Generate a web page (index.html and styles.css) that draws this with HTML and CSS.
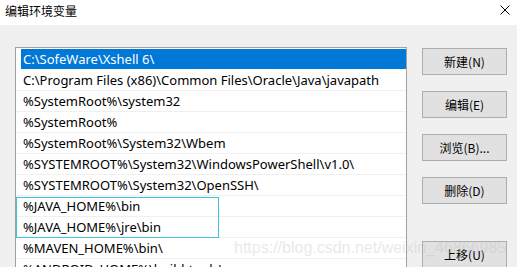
FILE: index.html
```html
<!DOCTYPE html>
<html lang="zh-CN">
<head>
    <meta charset="UTF-8">
    <meta name="viewport" content="width=device-width, initial-scale=1.0">
    <title>编辑环境变量</title>
    <link rel="stylesheet" href="styles.css">
</head>
<body>
    <div class="dialog">
        <div class="titlebar">
            <span class="title">编辑环境变量</span>
            <svg class="close" width="10" height="10" viewBox="0 0 10 10">
                <path d="M0.5 0.5 L9.5 9.5 M9.5 0.5 L0.5 9.5" stroke="#000" stroke-width="1" fill="none"/>
            </svg>
        </div>

        <div class="content">
            <div class="path-list">
                <div class="row selected">C:\SofeWare\Xshell 6\</div>
                <div class="row">C:\Program Files (x86)\Common Files\Oracle\Java\javapath</div>
                <div class="row">%SystemRoot%\system32</div>
                <div class="row">%SystemRoot%</div>
                <div class="row">%SystemRoot%\System32\Wbem</div>
                <div class="row">%SYSTEMROOT%\System32\WindowsPowerShell\v1.0\</div>
                <div class="row">%SYSTEMROOT%\System32\OpenSSH\</div>
                <div class="row">%JAVA_HOME%\bin</div>
                <div class="row">%JAVA_HOME%\jre\bin</div>
                <div class="row">%MAVEN_HOME%\bin\</div>
                <div class="row">%ANDROID_HOME%\build-tools\</div>
                <div class="highlight"></div>
            </div>

            <div class="buttons">
                <button class="btn">新建(N)</button>
                <button class="btn">编辑(E)</button>
                <button class="btn">浏览(B)...</button>
                <button class="btn">删除(D)</button>
                <button class="btn btn-move">上移(U)</button>
            </div>
        </div>

        <div class="watermark">https://blog.csdn.net/weixin_46866985</div>
    </div>
</body>
</html>
```

FILE: styles.css
```css
body {
    margin: 0; padding: 0; background-color: #f0f0f0;
    font-family: "Noto Sans", "Noto Sans CJK SC", sans-serif;
}
.dialog {
    position: relative; width: 517px; height: 267px; overflow: hidden;
}
.titlebar {
    height: 25px; background-color: #fff; display: flex; align-items: center; justify-content: space-between; padding: 0 7px 0 5px;
}
.title {
    font-size: 12px; color: #000; font-family: "Noto Sans CJK SC", sans-serif; margin-top: -4px;
}
.close {
    margin-top: -6px;
}
.content {
    display: flex; gap: 15px; padding: 22px 0 0 15px;
}
.path-list {
    position: relative; width: 390px; height: 240px; background-color: #fff; border: 1px solid #a0a0a0; padding-top: 1px;
}
.row {
    height: 20px; line-height: 20px; border-bottom: 1px solid #f0f0f0; padding-left: 7px;
    font-size: 13px; color: #000; white-space: nowrap;
}
.row.selected {
    margin-left: 5px; padding-left: 2px; background-color: #0078d7; color: #fff; border-bottom-color: #fff;
}
.highlight {
    position: absolute; left: 0; top: 149px; width: 201px; height: 39px; border: 1px solid #3cc8d8;
}
.buttons {
    display: flex; flex-direction: column; gap: 16px; padding-top: 1px;
}
.btn {
    width: 85px; height: 27px; background-color: #e1e1e1; border: 1px solid #adadad; padding: 0;
    font-family: "Noto Sans CJK SC", sans-serif; font-size: 12px; color: #000;
}
.btn-move {
    margin-top: 21px;
}
.watermark {
    position: absolute; left: 234px; top: 239px; font-family: "Liberation Sans", sans-serif; font-size: 16px;
    color: rgba(190, 190, 190, 0.35); white-space: nowrap;
}
```
